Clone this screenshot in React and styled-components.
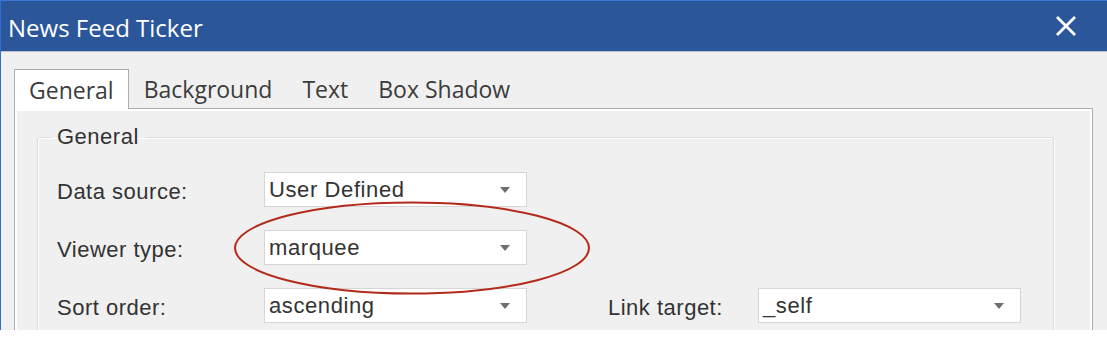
import React from 'react';
import styled, { createGlobalStyle } from 'styled-components';

const GlobalStyle = createGlobalStyle`
  body {
    margin: 0;
    background: #ffffff;
  }
`;

const Window = styled.div`
  position: relative;
  width: 1107px;
  height: 330px;
  overflow: hidden;
  box-sizing: border-box;
  border-left: 1px solid #2f6fce;
  background: #f0f0f0;
`;

const TitleBar = styled.div`
  height: 52px;
  box-sizing: border-box;
  border-top: 1px solid #3a78d8;
  border-bottom: 1px solid #b9c3d1;
  background: #2b579a;
  display: flex;
  align-items: center;
  justify-content: space-between;
  padding: 3px 31px 0 7px;
`;

const Title = styled.div`
  font-family: 'Open Sans', sans-serif;
  font-size: 24px;
  color: #ffffff;
`;

const CloseBtn = styled.svg`
  width: 20px;
  height: 20px;
  display: block;
  margin-top: -3px;
`;

const Body = styled.div`
  padding: 17px 14px 0 13px;
`;

const TabStrip = styled.div`
  display: flex;
  height: 39px;
  position: relative;
  z-index: 1;
`;

const Tab = styled.div`
  box-sizing: border-box;
  height: ${(p) => (p.$active ? '40px' : '39px')};
  padding: 0 14px;
  display: flex;
  align-items: center;
  font-family: 'Open Sans', sans-serif;
  font-size: 23px;
  color: #3c3c3c;
  background: ${(p) => (p.$active ? '#ffffff' : 'transparent')};
  border: 1px solid ${(p) => (p.$active ? '#adadad' : 'transparent')};
  border-bottom: none;
`;

const Panel = styled.div`
  box-sizing: border-box;
  height: 260px;
  border: 1px solid #acacac;
  box-shadow: inset 0 0 0 2px #ffffff;
  padding: 15px 38px 0 22px;
`;

const Fieldset = styled.fieldset`
  margin: 0;
  padding: 22px 0 40px 19px;
  border: 1px solid #dcdcdc;
  border-radius: 3px;
  box-shadow: 1px 1px 0 #ffffff, inset 1px 1px 0 #ffffff;
`;

const Legend = styled.legend`
  margin-left: -6px;
  padding: 0 6px;
  font-family: 'Liberation Sans', Arial, sans-serif;
  font-size: 22px;
  letter-spacing: 0.5px;
  color: #333333;
`;

const FormGrid = styled.div`
  display: grid;
  grid-template-columns: 207px 263px 81px 150px 263px;
  grid-auto-rows: 35px;
  row-gap: 23px;
  align-items: center;
`;

const Label = styled.div`
  grid-column: ${(p) => p.$col || 1};
  padding-top: 5px;
  font-family: 'Liberation Sans', Arial, sans-serif;
  font-size: 22px;
  letter-spacing: 0.5px;
  color: #333333;
  white-space: nowrap;
`;

const Select = styled.div`
  grid-column: ${(p) => p.$col || 2};
  box-sizing: border-box;
  height: 35px;
  background: #ffffff;
  border: 1px solid #d6d6d6;
  display: flex;
  align-items: center;
  justify-content: space-between;
  padding: 0 16px 0 4px;
  font-family: 'Liberation Sans', Arial, sans-serif;
  font-size: 22px;
  letter-spacing: 0.6px;
  color: #333333;
`;

const Arrow = styled.span`
  width: 0;
  height: 0;
  border-left: 5px solid transparent;
  border-right: 5px solid transparent;
  border-top: 6px solid #6f6f6f;
`;

const Highlight = styled.svg`
  position: absolute;
  left: 230px;
  top: 199px;
  width: 362px;
  height: 98px;
  pointer-events: none;
`;

const tabs = ['General', 'Background', 'Text', 'Box Shadow'];

const Field = ({ label, value, labelCol, selectCol }) => (
  <>
    <Label $col={labelCol}>{label}</Label>
    <Select $col={selectCol}>
      <span>{value}</span>
      <Arrow />
    </Select>
  </>
);

const App = () => {
  return (
    <>
      <GlobalStyle />
      <Window>
        <TitleBar>
          <Title>News Feed Ticker</Title>
          <CloseBtn viewBox="0 0 20 20">
            <path d="M2 2 L18 18 M18 2 L2 18" stroke="#ffffff" strokeWidth="2.8" strokeLinecap="square" />
          </CloseBtn>
        </TitleBar>
        <Body>
          <TabStrip>
            {tabs.map((t, i) => (
              <Tab key={t} $active={i === 0}>{t}</Tab>
            ))}
          </TabStrip>
          <Panel>
            <Fieldset>
              <Legend>General</Legend>
              <FormGrid>
                <Field label="Data source:" value="User Defined" />
                <Field label="Viewer type:" value="marquee" />
                <Field label="Sort order:" value="ascending" />
                <Field label="Link target:" value="_self" labelCol={4} selectCol={5} />
              </FormGrid>
            </Fieldset>
          </Panel>
        </Body>
        <Highlight viewBox="0 0 362 98">
          <ellipse cx="181" cy="49" rx="177" ry="45.5" fill="none" stroke="#b3291c" strokeWidth="2" />
        </Highlight>
      </Window>
    </>
  );
};

export default App;
